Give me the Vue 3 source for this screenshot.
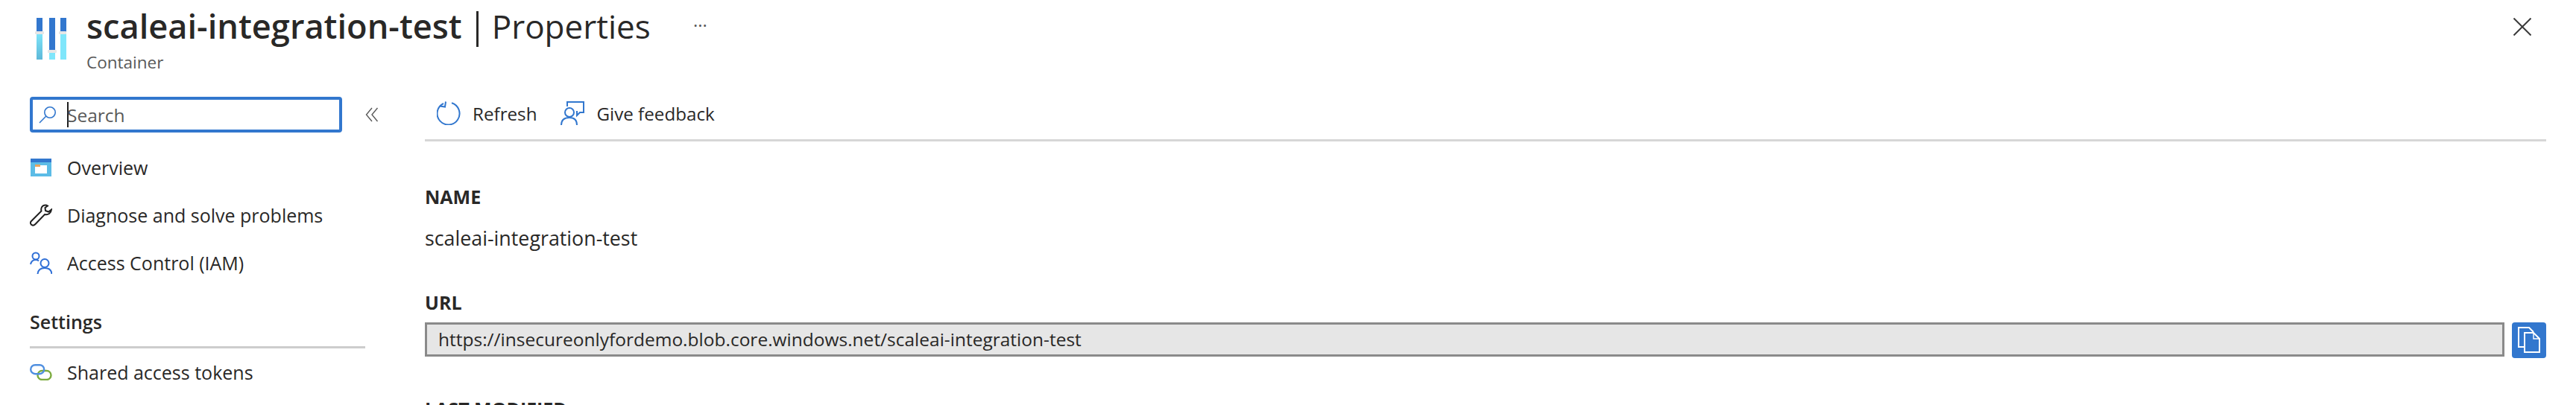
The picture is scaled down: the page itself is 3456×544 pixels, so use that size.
<script setup>
const url = 'https://insecureonlyfordemo.blob.core.windows.net/scaleai-integration-test'
</script>

<template>
  <div class="blade">
    <header class="blade-header">
      <svg class="logo" width="42" height="56" viewBox="0 0 42 56">
        <defs>
          <linearGradient id="barLow" x1="0" y1="0" x2="0" y2="1">
            <stop offset="0" stop-color="#7fe6fb" />
            <stop offset="1" stop-color="#5db8d8" />
          </linearGradient>
        </defs>
        <rect x="2" y="0" width="8" height="20" fill="#3277ce" />
        <rect x="2" y="20" width="8" height="36" fill="url(#barLow)" />
        <rect x="19" y="0" width="8" height="44" fill="#3277ce" />
        <rect x="19" y="44" width="8" height="12" fill="#7fe6fb" />
        <rect x="34" y="0" width="8" height="20" fill="#3277ce" />
        <rect x="34" y="20" width="8" height="36" fill="#7fe6fb" />
        <rect x="0" y="18" width="12" height="4" rx="1" fill="#e6e6e6" />
        <rect x="17" y="43" width="12" height="4" rx="1" fill="#e6e6e6" />
        <rect x="32" y="18" width="10" height="4" rx="1" fill="#e6e6e6" />
      </svg>
      <div class="titles">
        <h1 class="title"><strong>scaleai-integration-test</strong><span class="bar"></span>Properties</h1>
        <div class="subtitle">Container</div>
      </div>
      <span class="more">···</span>
      <svg class="close" width="24" height="24" viewBox="0 0 24 24">
        <path d="M0.5 0.5 L23.5 23.5 M23.5 0.5 L0.5 23.5" stroke="#3b3b3b" stroke-width="2" fill="none" />
      </svg>
    </header>

    <div class="blade-body">
      <aside class="sidebar">
        <div class="search-row">
          <div class="search">
            <svg width="24" height="24" viewBox="0 0 24 24" fill="none" stroke="#3277ce" stroke-width="1.6">
              <circle cx="15" cy="9" r="7.2" />
              <path d="M9.6 14.2 L1 23" />
            </svg>
            <span class="caret"></span>
            <span class="placeholder">Search</span>
          </div>
          <svg class="collapse" width="18" height="20" viewBox="0 0 18 20" fill="none" stroke="#5a5a5a" stroke-width="1.4">
            <path d="M9 1 L1.5 10 L9 19 M16.5 1 L9 10 L16.5 19" />
          </svg>
        </div>

        <nav class="nav">
          <a class="nav-item">
            <svg width="28" height="24" viewBox="0 0 28 24">
              <rect width="28" height="24" fill="#5cbce6" />
              <rect width="28" height="5" fill="#3277ce" />
              <rect x="6" y="9" width="16" height="11" fill="#fff" />
              <rect x="6" y="8" width="7" height="3" fill="#eaa45e" />
            </svg>
            Overview
          </a>
          <a class="nav-item">
            <svg width="30" height="30" viewBox="0 0 30 30" fill="none" stroke="#1f1f1f" stroke-width="2">
              <path d="M21 1.5 C16.5 1.5 14.5 5.5 15.5 9.5 L2 23 C0 25 1 28 3.5 28.5 C5 29 6.5 28 7.5 27 L20 14 C24.5 15 28.5 12.5 29 7.5 L25 10.5 L21 9 L20.5 5 L24 2.5 C23 1.8 22 1.5 21 1.5 Z" />
            </svg>
            Diagnose and solve problems
          </a>
          <a class="nav-item">
            <svg width="30" height="30" viewBox="0 0 30 30" fill="none" stroke="#2f6fd6" stroke-width="2">
              <circle cx="8" cy="6" r="4.5" />
              <path d="M1 17 C2 12.5 5 11 8 11 C9.5 11 11 11.5 12 12.5" />
              <circle cx="20" cy="15.5" r="5.5" />
              <path d="M10.5 30 C11 24.5 15 22 20 22 C25 22 29 24.5 29.5 30" />
            </svg>
            Access Control (IAM)
          </a>
        </nav>

        <div class="section-title">Settings</div>
        <nav class="nav">
          <a class="nav-item">
            <svg width="30" height="22" viewBox="0 0 30 22" fill="none" stroke-width="2.4">
              <rect x="10.5" y="9" width="18" height="12" rx="6" stroke="#7cab3f" />
              <rect x="1.2" y="1.2" width="18" height="12" rx="6" stroke="#4f8fe0" />
            </svg>
            Shared access tokens
          </a>
        </nav>
      </aside>

      <main class="content">
        <div class="toolbar">
          <button class="tool" type="button">
            <svg width="32" height="32" viewBox="0 0 32 32" fill="none" stroke="#3277ce" stroke-width="2">
              <path d="M20 2.2 A15 15 0 1 1 9 3" />
              <path d="M12 0.5 L11 7.5 L4 6.5" />
            </svg>
            Refresh
          </button>
          <button class="tool" type="button">
            <svg width="32" height="32" viewBox="0 0 32 32" fill="none" stroke="#3277ce" stroke-width="2">
              <path d="M9 7 V1 H31 V15 H26 L22 19 V13" />
              <circle cx="12" cy="15" r="6" />
              <path d="M1 32 C1 25 5 22 12 22 C18 22 22 25 22 32" />
            </svg>
            Give feedback
          </button>
        </div>

        <section class="field">
          <h2 class="field-label">NAME</h2>
          <div class="field-value">scaleai-integration-test</div>
        </section>

        <section class="field field-url">
          <h2 class="field-label">URL</h2>
          <div class="copy-row">
            <div class="readonly">{{ url }}</div>
            <button class="copy" type="button">
              <svg width="30" height="36" viewBox="0 0 30 36" fill="none" stroke="#fff" stroke-width="2">
                <path d="M9 27 H1 V1 H15 L21 7" />
                <path d="M9 8 H21 L29 16 V34 H9 Z" />
                <path d="M21 8 V16 H29" stroke-width="1.4" />
              </svg>
            </button>
          </div>
        </section>

        <section class="field field-last">
          <h2 class="field-label">LAST MODIFIED</h2>
        </section>
      </main>
    </div>
  </div>
</template>

<style scoped>
.blade {
  width: 3456px;
  height: 544px;
  overflow: hidden;
  background: #fff;
  color: #292827;
  font-family: "Open Sans", "Noto Sans", sans-serif;
  font-size: 25px;
}

.blade-header {
  display: flex;
  align-items: flex-start;
  height: 130px;
  padding: 24px 60px 0 47px;
  box-sizing: border-box;
}

.logo {
  flex-shrink: 0;
  margin-right: 27px;
}

.titles {
  width: 800px;
  margin-top: -24px;
}

.title {
  display: flex;
  align-items: center;
  margin: 0;
  font-size: 44px;
  font-weight: 400;
  line-height: 70px;
  white-space: nowrap;
}

.title strong {
  font-size: 45.2px;
  font-weight: 600;
}

.bar {
  flex-shrink: 0;
  width: 3px;
  height: 48px;
  margin: 8px 18px 0 19px;
  background: #292827;
}

.subtitle {
  margin-top: -1px;
  font-size: 22.5px;
  line-height: 30px;
  color: #595959;
}

.more {
  margin-left: 14px;
  font-size: 24px;
  line-height: 20px;
  color: #595959;
}

.close {
  margin-left: auto;
}

.blade-body {
  display: flex;
}

.sidebar {
  flex-shrink: 0;
  width: 570px;
  padding-left: 40px;
  box-sizing: border-box;
}

.search-row {
  display: flex;
  align-items: center;
  gap: 31px;
  margin-bottom: 17px;
}

.search {
  display: flex;
  align-items: center;
  width: 419px;
  height: 48px;
  padding-left: 8px;
  box-sizing: border-box;
  border: 4px solid #3277ce;
  border-radius: 4px;
}

.caret {
  width: 2px;
  height: 34px;
  margin-left: 14px;
  background: #1f1f1f;
}

.placeholder {
  margin-left: -2px;
  font-size: 24.5px;
  color: #595959;
}

.nav {
  display: flex;
  flex-direction: column;
  gap: 4px;
}

.nav-item {
  display: flex;
  align-items: center;
  width: 450px;
  height: 60px;
  gap: 20px;
  white-space: nowrap;
}

.nav-item svg {
  flex-shrink: 0;
  width: 30px;
}

.section-title {
  width: 450px;
  margin-top: 32px;
  padding-bottom: 16px;
  border-bottom: 3px solid #cdcdcd;
  font-weight: 600;
  line-height: 34px;
}

.section-title + .nav {
  margin-top: 2px;
}

.content {
  flex: 1;
  min-width: 0;
  padding-right: 40px;
}

.toolbar {
  display: flex;
  gap: 32px;
  height: 60px;
  padding: 6px 0 0 16px;
  box-sizing: border-box;
  border-bottom: 3px solid #d6d6d6;
}

.tool {
  display: flex;
  align-items: flex-start;
  gap: 16px;
  padding: 0;
  border: none;
  background: none;
  color: inherit;
  font: inherit;
  font-size: 24.2px;
}

.field {
  margin-top: 57px;
}

.field-url {
  margin-top: 52px;
}

.field-last {
  margin-top: 51px;
}

.field-label {
  margin: 0;
  font-size: 25px;
  font-weight: 700;
  line-height: 34px;
}

.field-value {
  margin-top: 22px;
  font-size: 26.8px;
  line-height: 34px;
}

.copy-row {
  display: flex;
  gap: 10px;
  margin-top: 10px;
}

.readonly {
  flex: 1;
  height: 46px;
  padding-left: 15px;
  box-sizing: border-box;
  border: 3px solid #8a8a8a;
  background: #e6e6e6;
  font-size: 24.5px;
  line-height: 40px;
}

.copy {
  display: flex;
  align-items: center;
  justify-content: center;
  width: 46px;
  height: 48px;
  padding: 0;
  border: none;
  border-radius: 4px;
  background: #3277ce;
}
</style>
